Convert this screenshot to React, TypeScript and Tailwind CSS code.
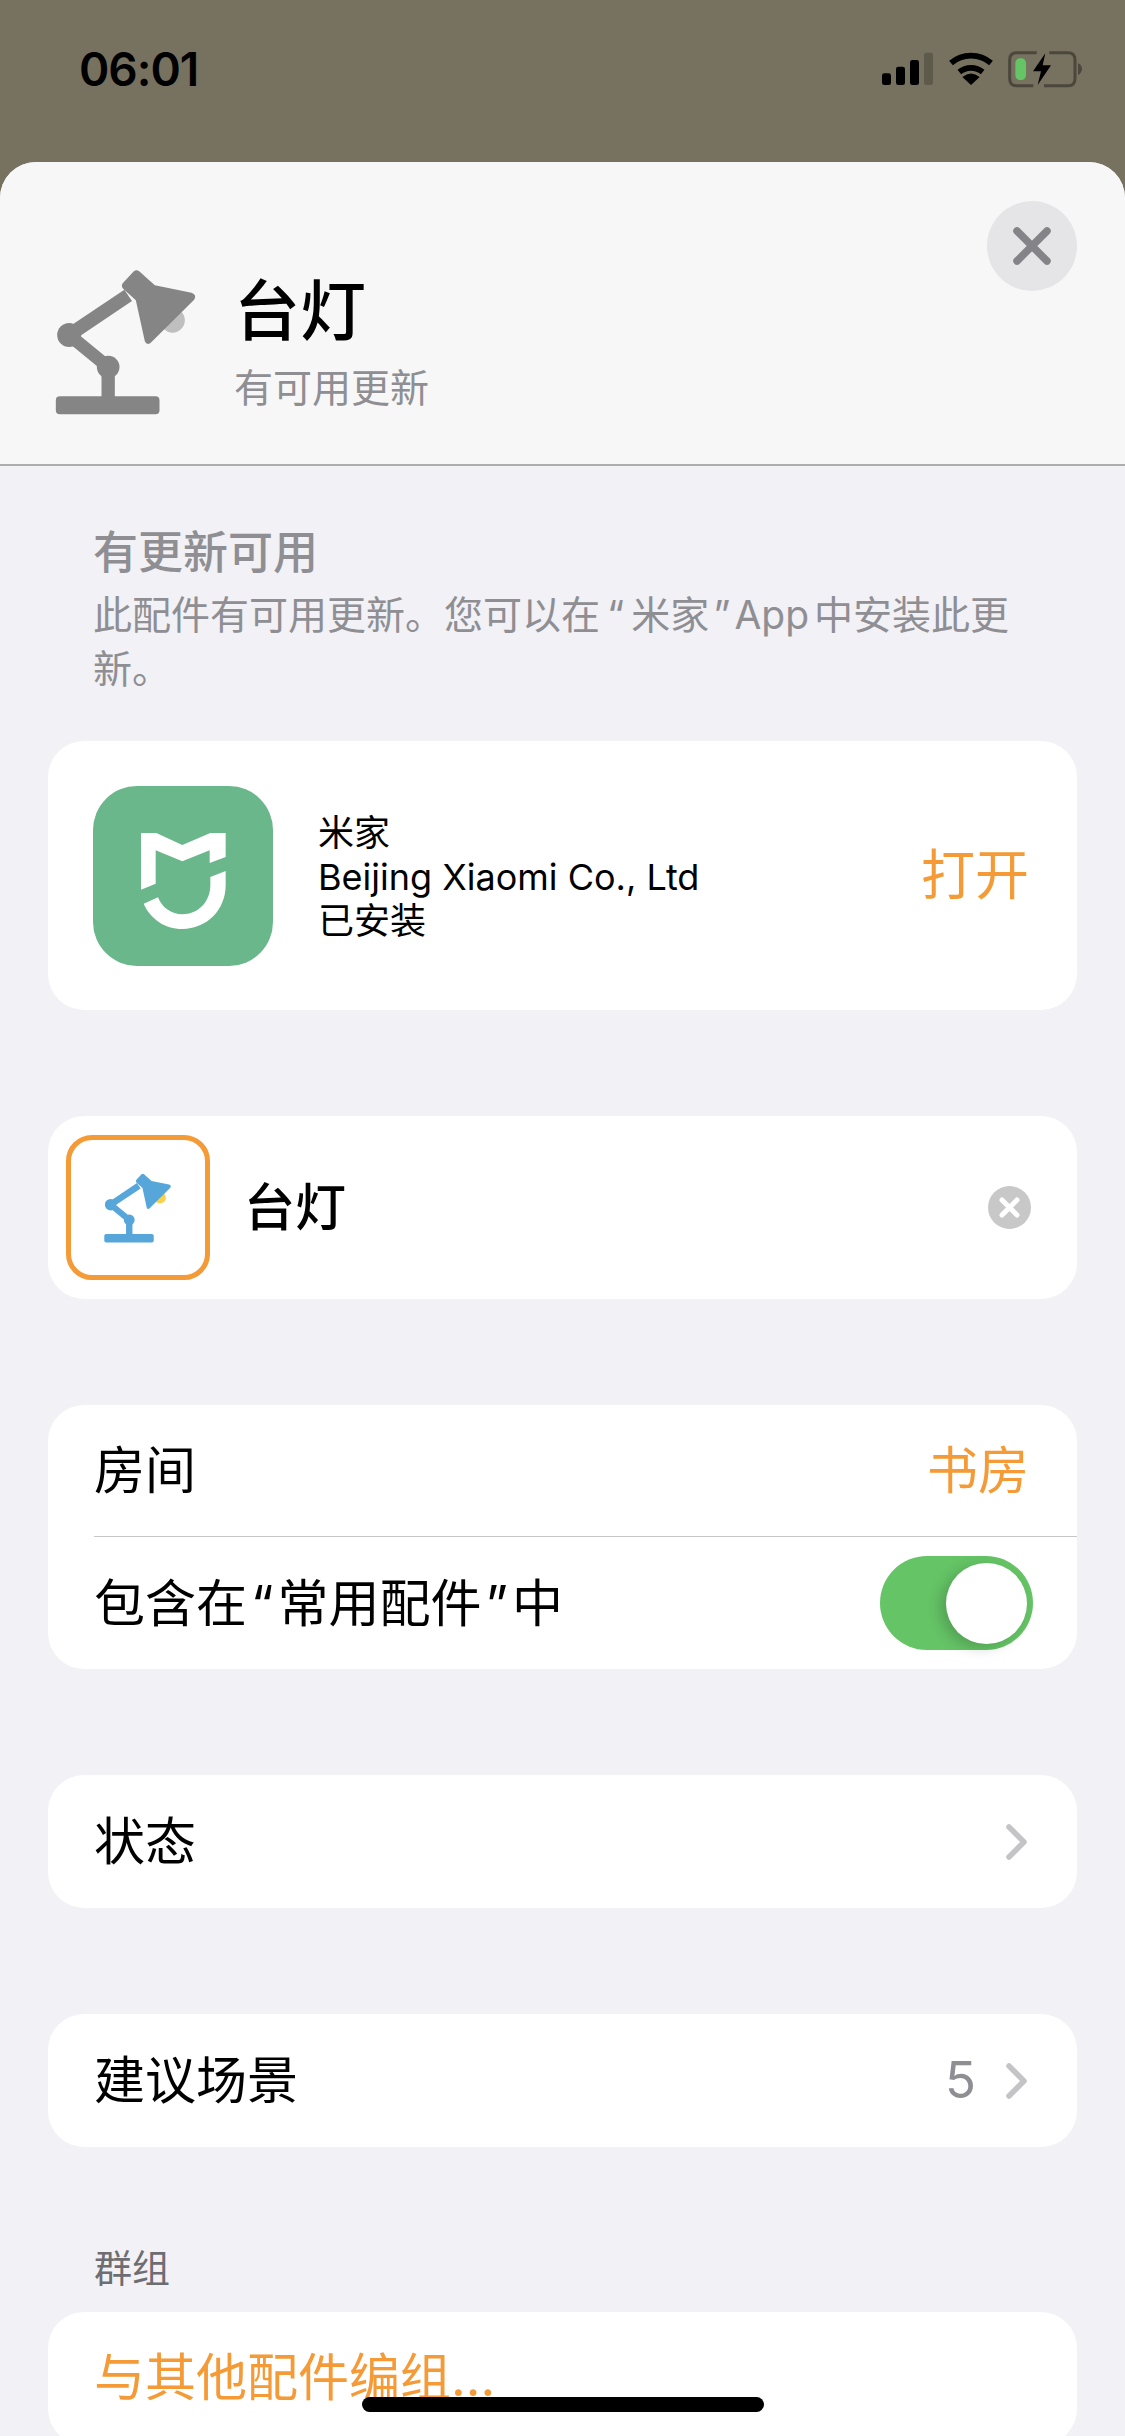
import React from 'react';

const Lamp: React.FC<{ color: string; bulb: string; className?: string }> = ({ color, bulb, className }) => (
  <svg viewBox="70 80 440 450" className={className}>
    <circle cx="428" cy="240" r="37" fill={bulb} />
    <rect x="78" y="468" width="311" height="54" rx="12" fill={color} />
    <rect x="215" y="380" width="40" height="92" fill={color} />
    <circle cx="235" cy="380" r="34" fill={color} />
    <circle cx="118" cy="284" r="36" fill={color} />
    <path d="M118 284 L235 380" stroke={color} strokeWidth="38" fill="none" />
    <path d="M118 284 L295 165" stroke={color} strokeWidth="41" fill="none" />
    <path
      d="M312 93 Q320 87 328 93 L375 135 L485 157 Q502 163 493 178 L362 308 Q350 316 345 303 L318 180 L280 145 Q272 135 280 127 Z"
      fill={color}
    />
  </svg>
);

const MijiaLogo = () => (
  <div className="w-[180px] h-[180px] rounded-[44px] bg-[#6ab78b] shrink-0">
    <svg viewBox="40 47 540 540" className="w-full h-full">
      <path
        d="M184 188 H230 L308 224 L392 188 H438 V260 L390 278 V240 L308 273 L228 240 V340 L184 358 Z"
        fill="#fff"
      />
      <path
        d="M438 302 V345 C438 420 380 476 308 476 C255 476 212 445 192 400 L235 381 C247 412 275 432 308 432 C355 432 392 395 392 345 V320 Z"
        fill="#fff"
      />
    </svg>
  </div>
);

const StatusIcons = () => (
  <svg viewBox="0 0 720 210" className="w-[240px] h-[70px]">
    <rect x="66" y="130" width="27" height="35" rx="7" fill="#000" />
    <rect x="108" y="110" width="27" height="55" rx="7" fill="#000" />
    <rect x="150" y="90" width="27" height="75" rx="7" fill="#000" />
    <rect x="192" y="68" width="27" height="97" rx="7" fill="#5d594b" />
    <path d="M273 99 A92 92 0 0 1 393 99 M298 126 A55 55 0 0 1 368 126" stroke="#000" strokeWidth="17" fill="none" />
    <path d="M333 165 L307 141 Q333 120 359 141 Z" fill="#000" />
    <path
      d="M530 68 H470 Q449 68 449 89 V146 Q449 167 470 167 H520 M568 68 H624 Q645 68 645 89 V146 Q645 167 624 167 H552"
      stroke="#4b473c"
      strokeWidth="9"
      fill="none"
    />
    <path d="M654 100 Q666 106 666 117 Q666 128 654 135 Z" fill="#4b473c" />
    <rect x="466" y="85" width="32" height="65" rx="14" fill="#65c466" />
    <path d="M556 70 L519 124 H543 L533 165 L573 106 H548 Z" fill="#000" />
  </svg>
);

const Chevron = () => (
  <svg viewBox="0 0 21 36" className="w-[21px] h-[36px]">
    <path d="M3 3 L18 18 L3 33" stroke="#c4c4c7" strokeWidth="5.5" strokeLinecap="round" strokeLinejoin="round" fill="none" />
  </svg>
);

const Row: React.FC<{ label: string; children?: React.ReactNode }> = ({ label, children }) => (
  <div className="h-[133px] mt-[106px] bg-white rounded-[36px] pl-[46px] pr-[50px] flex items-center justify-between text-[51px] text-black">
    <span className="pt-[2px]">{label}</span>
    <div className="flex items-center gap-[30px]">{children}</div>
  </div>
);

export default function App() {
  return (
    <div className="w-[1125px] h-[2436px] overflow-hidden relative bg-[#777160] [font-family:Inter,'Noto_Sans_CJK_SC',sans-serif]">
      <div className="h-[162px] flex items-start justify-between pl-[79px] pr-[25px] pt-[30px]">
        <span className="mt-[4px] text-[46px] leading-[70px] font-semibold text-black tracking-[-1px]">06:01</span>
        <StatusIcons />
      </div>

      <div className="rounded-t-[36px] overflow-hidden bg-[#f1f1f6] h-[2274px]">
        <div className="h-[304px] bg-[#f7f7f7] border-b-2 border-[#adadad] flex items-start pl-[53px] pt-[105px] gap-[34px]">
          <Lamp color="#858585" bulb="#bfbfbf" className="w-[147px] h-[150px] shrink-0" />
          <div className="pt-[4px]">
            <div className="text-[66px] leading-[80px] font-medium text-black">台灯</div>
            <div className="text-[39px] leading-[54px] mt-[10px] text-[#8e8e93]">有可用更新</div>
          </div>
        </div>

        <div className="px-[48px]">
          <div className="pl-[45px] pr-[30px] pt-[60px]">
            <div className="text-[45px] leading-[54px] font-medium text-[#8e8e93]">有更新可用</div>
            <div className="text-[39px] leading-[54px] mt-[8px] text-[#8e8e93]">
              此配件有可用更新。您可以在<span className="px-[7px]">“</span>米家<span className="px-[4px]">”</span>
              <span className="mr-[5px]">App</span>中安装此更
              <br />
              新。
            </div>
          </div>

          <div className="mt-[45px] h-[269px] bg-white rounded-[36px] pl-[45px] pr-[48px] flex items-center">
            <MijiaLogo />
            <div className="ml-[45px] flex-1 text-[36px] leading-[44px] pt-[2px] text-black">
              <div>米家</div>
              <div>Beijing Xiaomi Co., Ltd</div>
              <div>已安装</div>
            </div>
            <span className="text-[54px] text-[#f49a36]">打开</span>
          </div>

          <div className="mt-[106px] h-[183px] bg-white rounded-[36px] pl-[18px] pr-[46px] flex items-center">
            <div className="w-[144px] h-[145px] border-[5px] border-[#f49a36] rounded-[26px] flex items-center justify-center shrink-0">
              <Lamp color="#57a6da" bulb="#f8d24e" className="w-[70px] h-[72px]" />
            </div>
            <span className="ml-[34px] flex-1 pt-[2px] text-[51px] font-medium text-black">台灯</span>
            <svg viewBox="0 0 43 43" className="w-[43px] h-[43px]">
              <circle cx="21.5" cy="21.5" r="21.5" fill="#c8c8c8" />
              <path d="M14 14 L29 29 M29 14 L14 29" stroke="#fff" strokeWidth="5" strokeLinecap="round" />
            </svg>
          </div>

          <div className="mt-[106px] bg-white rounded-[36px] h-[264px] flex flex-col text-[51px] text-black">
            <div className="h-[132px] ml-[46px] pr-[48px] flex items-center justify-between border-b border-[#c6c6c8]">
              <span className="pt-[2px]">房间</span>
              <span className="pt-[2px] text-[#f49a36]">书房</span>
            </div>
            <div className="flex-1 pl-[46px] pr-[44px] flex items-center justify-between">
              <span className="pt-[2px]">
                包含在<span className="px-[4px]">“</span>常用配件<span className="px-[4px]">”</span>中
              </span>
              <div className="w-[153px] h-[94px] rounded-full bg-[#65c466] flex items-center justify-end pr-[6px]">
                <div className="w-[81px] h-[81px] rounded-full bg-white shadow-[-6px_4px_14px_rgba(0,0,0,0.18)]" />
              </div>
            </div>
          </div>

          <Row label="状态">
            <Chevron />
          </Row>
          <Row label="建议场景">
            <span className="text-[#8e8e93]">5</span>
            <Chevron />
          </Row>

          <div className="pl-[46px] mt-[94px] text-[38px] leading-[54px] text-[#6d6d72]">群组</div>
          <div className="mt-[17px] h-[133px] bg-white rounded-[36px] pl-[46px] flex items-center text-[51px] text-[#f49a36]">
            与其他配件编组...
          </div>
        </div>
      </div>

      <button className="absolute left-[987px] top-[201px] w-[90px] h-[90px] rounded-full bg-[#e5e5e7] flex items-center justify-center">
        <svg viewBox="0 0 38 38" className="w-[38px] h-[38px]">
          <path d="M4 4 L34 34 M34 4 L4 34" stroke="#848488" strokeWidth="7.5" strokeLinecap="round" />
        </svg>
      </button>

      <div className="absolute left-[362px] top-[2397px] w-[402px] h-[15px] rounded-full bg-black" />
    </div>
  );
}
